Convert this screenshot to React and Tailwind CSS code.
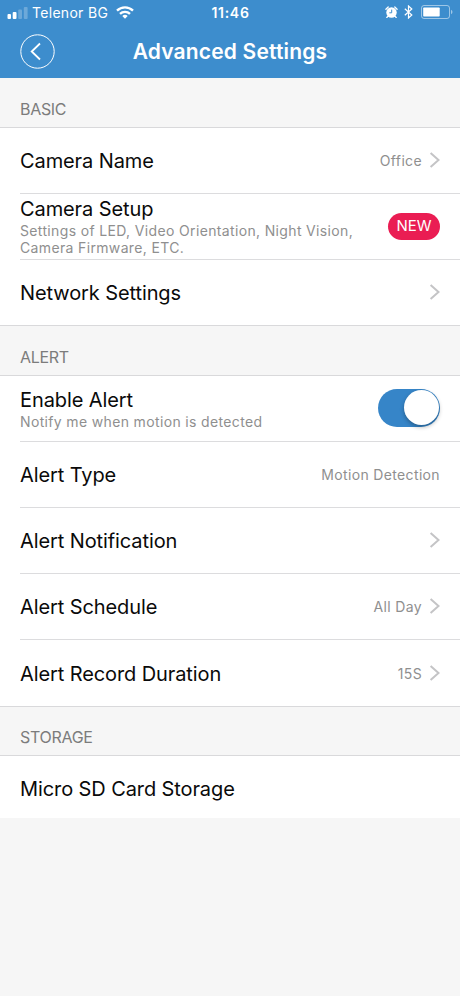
const sections = [
    {
        title: "BASIC",
        headerClass: "h-[50px]",
        lastClass: "h-[65px]",
        rows: [
            { label: "Camera Name", value: "Office", arrow: true },
            {
                label: "Camera Setup",
                note: "Settings of LED, Video Orientation, Night Vision, Camera Firmware, ETC.",
                badge: "NEW",
            },
            { label: "Network Settings", arrow: true },
        ],
    },
    {
        title: "ALERT",
        headerClass: "h-[50px]",
        lastClass: "h-[66px] pt-px",
        rows: [
            { label: "Enable Alert", note: "Notify me when motion is detected", toggle: true },
            { label: "Alert Type", value: "Motion Detection" },
            { label: "Alert Notification", arrow: true },
            { label: "Alert Schedule", value: "All Day", arrow: true },
            { label: "Alert Record Duration", value: "15S", arrow: true },
        ],
    },
    {
        title: "STORAGE",
        headerClass: "h-[49px]",
        lastClass: "h-[62px] pt-[3px]",
        noBorder: true,
        rows: [{ label: "Micro SD Card Storage" }],
    },
];

function StatusBar() {
    return (
        <div className="grid h-6 grid-cols-[1fr_auto_1fr] items-center pr-[7px] pl-[7px] text-white">
            <div className="flex items-center">
                <svg className="mt-px" width="21" height="12" viewBox="0 0 21 12" fill="currentColor">
                    <rect x="0.5" y="7" width="3.5" height="5" rx="1" />
                    <rect x="5.7" y="5" width="3.8" height="7" rx="1" />
                    <rect x="11.2" y="2.5" width="3.8" height="9.5" rx="1" opacity="0.25" />
                    <rect x="16.8" y="0" width="3.8" height="12" rx="1" opacity="0.25" />
                </svg>
                <span className="ml-[4px] text-[14px] tracking-[0.3px]">Telenor BG</span>
                <svg className="ml-[8px]" width="18" height="13" viewBox="0 0 18 13" fill="none" stroke="currentColor" strokeWidth="2.4">
                    <path d="M1 4.6a11.6 11.6 0 0 1 16 0" />
                    <path d="M4 7.9a7.2 7.2 0 0 1 10 0" />
                    <path d="M9 12.8 6.3 10.1a3.9 3.9 0 0 1 5.4 0z" fill="currentColor" stroke="none" />
                </svg>
            </div>
            <span className="pl-px text-[14px] font-semibold tracking-[0.7px]">11:46</span>
            <div className="flex items-center justify-end">
                <svg width="13" height="12" viewBox="0 0 13 12">
                    <circle cx="6.5" cy="6.5" r="5.2" fill="currentColor" />
                    <path d="M0.9 3.2 3.2 1M12.1 3.2 9.8 1M2.8 10.3 1.8 11.5M10.2 10.3l1 1.2" stroke="currentColor" strokeWidth="1.3" strokeLinecap="round" />
                    <path d="M6.7 3.6v3.2H4.3" fill="none" stroke="#3d8dcd" strokeWidth="1" />
                </svg>
                <svg className="ml-[6px]" width="9" height="14" viewBox="0 0 9 14" fill="none" stroke="currentColor" strokeWidth="1.2">
                    <path d="M0.8 3.8 7.8 10 4.5 13V1l3.3 3-7 6.2" />
                </svg>
                <svg className="ml-[8px]" width="32" height="14" viewBox="0 0 32 14">
                    <rect x="0.5" y="0.5" width="28" height="13" rx="2.5" fill="none" stroke="currentColor" opacity="0.5" />
                    <rect x="2.2" y="2.5" width="16.5" height="9" rx="0.8" fill="currentColor" />
                    <path d="M30 4.8c2 .8 2 3.6 0 4.4z" fill="currentColor" opacity="0.5" />
                </svg>
            </div>
        </div>
    );
}

function Toggle() {
    return (
        <button className="mb-[2px] flex h-[38px] w-[62px] items-center justify-end rounded-full bg-[#3685c8] pr-[1px]">
            <span className="size-[35px] rounded-full bg-white shadow-[0_2px_4px_rgba(0,0,0,0.3)]" />
        </button>
    );
}

function Chevron() {
    return (
        <svg className="mb-px ml-[7px]" width="11" height="16" viewBox="0 0 11 16" fill="none" stroke="#c4c4c6" strokeWidth="2">
            <path d="m1.6 1 7.9 7-7.9 7" />
        </svg>
    );
}

function Row({ row, lastClass }) {
    return (
        <div className={`${lastClass || "h-[66px] border-b border-[#dcdcde]"} ml-5 flex items-center pr-5`}>
            <div className="flex-1">
                <div className={`${row.badge ? "-mt-px" : ""} text-[20px] leading-6 tracking-[-0.1px] text-[#0a0a0a]`}>{row.label}</div>
                {row.note && <div className="w-[345px] pt-px text-[14px] leading-[17px] tracking-[0.35px] text-[#8f8f8f]">{row.note}</div>}
            </div>
            {row.value && <span className="text-[14px] tracking-[0.35px] text-[#8f8f8f]">{row.value}</span>}
            {row.badge && (
                <span className="flex h-[27px] w-[52px] items-center justify-center rounded-full bg-[#ea1d53] text-[15px] text-white">{row.badge}</span>
            )}
            {row.toggle && <Toggle />}
            {row.arrow && <Chevron />}
        </div>
    );
}

export default function App() {
    return (
        <div className="h-[996px] w-[460px] overflow-hidden bg-[#f6f6f6] font-['Inter',sans-serif]">
            <header className="h-[78px] bg-[#3d8dcd]">
                <StatusBar />
                <div className="grid h-[54px] grid-cols-[1fr_auto_1fr] items-center px-5">
                    <button className="size-[35px]">
                        <svg width="35" height="35" viewBox="0 0 35 35" fill="none" stroke="#fff">
                            <circle cx="17.5" cy="17.5" r="16.7" strokeWidth="1" />
                            <path d="m20 9.5-8.3 8 8.3 8" strokeWidth="1.8" />
                        </svg>
                    </button>
                    <h1 className="pt-px text-[21px] font-semibold tracking-[0.18px] text-white">Advanced Settings</h1>
                </div>
            </header>

            {sections.map((section) => (
                <section key={section.title}>
                    <h2 className={`${section.headerClass} flex items-end border-b border-[#d9d9db] pb-[6px] pl-5 text-[16px] tracking-[-0.3px] text-[#7c7c7c]`}>
                        {section.title}
                    </h2>
                    <div className={section.noBorder ? "bg-white" : "border-b border-[#d9d9db] bg-white"}>
                        {section.rows.map((row, i) => (
                            <Row key={row.label} row={row} lastClass={i === section.rows.length - 1 ? section.lastClass : ""} />
                        ))}
                    </div>
                </section>
            ))}
        </div>
    );
}
